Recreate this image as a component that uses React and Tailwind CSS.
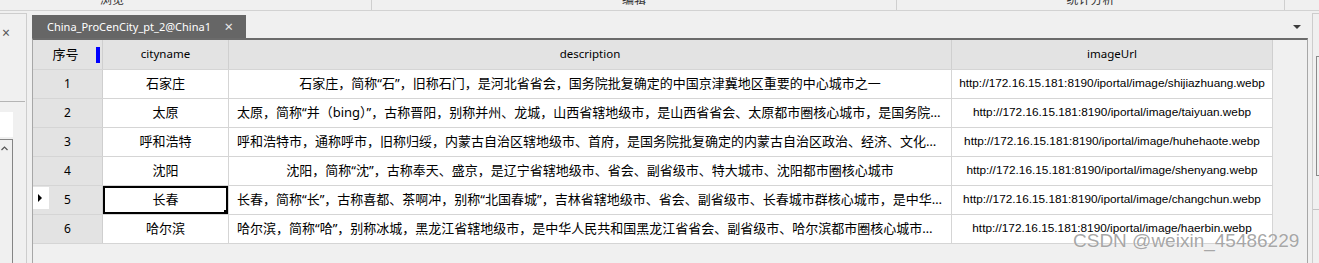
import React from 'react'

const COLS = [
  { key: 'cityname', label: 'cityname', w: 'w-[126px]' },
  { key: 'description', label: 'description', w: 'w-[723px]' },
  { key: 'imageUrl', label: 'imageUrl', w: 'w-[321px]' },
]

const URL = 'http://172.16.15.181:8190/iportal/image/'

const FILAS = [
  {
    cityname: '石家庄',
    description: '石家庄，简称“石”，旧称石门，是河北省省会，国务院批复确定的中国京津冀地区重要的中心城市之一',
    imageUrl: URL + 'shijiazhuang.webp',
  },
  {
    cityname: '太原',
    description: '太原，简称“并（bing）”，古称晋阳，别称并州、龙城，山西省辖地级市，是山西省省会、太原都市圈核心城市，是国务院批复确定的中国中部地区重要的中心城市',
    imageUrl: URL + 'taiyuan.webp',
  },
  {
    cityname: '呼和浩特',
    description: '呼和浩特市，通称呼市，旧称归绥，内蒙古自治区辖地级市、首府，是国务院批复确定的内蒙古自治区政治、经济、文化、科教和金融中心',
    imageUrl: URL + 'huhehaote.webp',
  },
  {
    cityname: '沈阳',
    description: '沈阳，简称“沈”，古称奉天、盛京，是辽宁省辖地级市、省会、副省级市、特大城市、沈阳都市圈核心城市',
    imageUrl: URL + 'shenyang.webp',
  },
  {
    cityname: '长春',
    description: '长春，简称“长”，古称喜都、茶啊冲，别称“北国春城”，吉林省辖地级市、省会、副省级市、长春城市群核心城市，是中华人民共和国重要的工业基地城市',
    imageUrl: URL + 'changchun.webp',
  },
  {
    cityname: '哈尔滨',
    description: '哈尔滨，简称“哈”，别称冰城，黑龙江省辖地级市，是中华人民共和国黑龙江省省会、副省级市、哈尔滨都市圈核心城市、国务院批复确定的中国东北地区重要的中心城市',
    imageUrl: URL + 'haerbin.webp',
  },
]

const CJK = 'font-["Noto_Sans","Noto_Sans_CJK_SC",sans-serif]'

function Grupo({ label, w, sep = true }) {
  return (
    <div className={`${w} h-full flex justify-center items-end ${sep ? 'border-r border-[#cfcfcf]' : ''}`}>
      <span className="mb-[4px] text-[12px] leading-none text-[#333]">{label}</span>
    </div>
  )
}

function Celda({ col, fila, seleccionada }) {
  const esUrl = col.key === 'imageUrl'
  return (
    <div
      className={`${col.w} shrink-0 h-full border-r border-[#d5d5d5] bg-white relative flex items-center justify-center ${esUrl ? 'px-[3px]' : 'px-[8px]'} overflow-hidden`}
    >
      <span
        className={`block w-full text-center truncate ${esUrl ? 'text-[11.8px] font-["Liberation_Sans",sans-serif]' : 'text-[13px]'} text-black leading-none pb-[1px]`}
      >
        {fila[col.key]}
      </span>
      {seleccionada && (
        <>
          <div className="absolute inset-0 border-2 border-black pointer-events-none" />
          <div className="absolute right-0 bottom-0 w-[4px] h-[4px] bg-black" />
        </>
      )}
    </div>
  )
}

export default function App() {
  return (
    <div className={`w-[1319px] h-[263px] overflow-hidden bg-[#f0f0f0] relative ${CJK}`}>
      {/* Ribbon labels (cut off) */}
      <div className="h-[11px] border-b border-[#d2d2d2] overflow-hidden flex">
        <div className="ml-[-147px] flex h-full">
          <Grupo label="浏览" w="w-[519px]" />
          <Grupo label="编辑" w="w-[525px]" />
          <Grupo label="统计分析" w="w-[388px]" />
        </div>
      </div>

      <div className="flex h-[252px]">
        {/* Left dock */}
        <div className="w-[27px] mt-[2px] border-t border-r border-[#cdcdcd] flex flex-col">
          <div className="h-[88px] w-[25px] border-b border-[#b4b4b4]">
            <div className="pl-[2px] pt-[12px] text-[14px] leading-none text-[#555]">×</div>
          </div>
          <div className="mt-[10px] h-[25px] w-[13px] bg-white" />
          <div className="mt-[2px] w-[13px] flex-1 border-t border-r border-[#858585]">
            <svg width="7" height="5" viewBox="0 0 7 5" className="mt-[6px] ml-[1px]">
              <path d="M0.5 4 L3.5 1 L6.5 4" fill="none" stroke="#555" strokeWidth="1.2" />
            </svg>
          </div>
        </div>

        {/* Main attribute table panel */}
        <div className="ml-[5px] mt-[4px] w-[1276px] flex flex-col">
          <div className="h-[23px] flex items-stretch">
            <div className="w-[214px] bg-[#666666] flex items-center pl-[15px] pr-[13px]">
              <span className="text-[11px] text-white leading-none pb-[1px]">China_ProCenCity_pt_2@China1</span>
              <span className="ml-auto text-[15px] text-[#e8e8e8] leading-none">×</span>
            </div>
            <div className="flex-1 flex items-center justify-end pr-[7px]">
              <div className="w-0 h-0 border-l-[4px] border-r-[4px] border-t-[4px] border-l-transparent border-r-transparent border-t-[#3c3c3c]" />
            </div>
          </div>

          <div className="flex-1 border-t-2 border-[#6b6b6b] border-l border-r border-l-[#a7a7a7] border-r-[#a7a7a7]">
            {/* Header */}
            <div className="flex h-[30px] border-b border-[#d5d5d5] w-[1240px]">
              <div className="w-[70px] shrink-0 h-full bg-[#e3e3e3] border-r border-[#cfcfcf] flex items-center justify-center relative">
                <span className="text-[13px] text-black leading-none pr-[4px]">序号</span>
                <div className="absolute left-[63px] top-[7px] w-[4px] h-[16px] bg-[#0000ff]" />
              </div>
              {COLS.map(col => (
                <div
                  key={col.key}
                  className={`${col.w} shrink-0 h-full bg-[#e3e3e3] border-r border-[#cfcfcf] flex items-center justify-center`}
                >
                  <span className="text-[11.5px] text-black leading-none pb-[1px]">{col.label}</span>
                </div>
              ))}
            </div>

            {/* Rows */}
            {FILAS.map((fila, i) => (
              <div key={fila.cityname} className="flex h-[29px] border-b border-[#d5d5d5] w-[1240px]">
                <div className="w-[70px] shrink-0 h-full bg-[#e3e3e3] border-r border-[#cfcfcf] flex items-center justify-center relative">
                  {i === 4 && (
                    <div className="absolute left-0 top-[1px] w-[16px] h-[22px] bg-white flex items-center pl-[5px]">
                      <div className="w-0 h-0 border-t-[4px] border-b-[4px] border-l-[4px] border-t-transparent border-b-transparent border-l-black" />
                    </div>
                  )}
                  <span className="text-[12px] text-black leading-none">{i + 1}</span>
                </div>
                {COLS.map(col => (
                  <Celda key={col.key} col={col} fila={fila} seleccionada={i === 4 && col.key === 'cityname'} />
                ))}
              </div>
            ))}
          </div>
        </div>

        {/* Right dock edge */}
        <div className="ml-[4px] mt-[2px] flex-1 border-t border-l border-[#cdcdcd] flex flex-col">
          <div className="ml-[3px] mt-[42px] h-[120px] border border-r-0 border-[#8a8a8a]" />
          <div className="mt-[33px] border-t border-[#c4c4c4]" />
        </div>
      </div>

      {/* Watermark */}
      <div className="absolute left-[1073px] top-[231px] text-[19px] leading-none text-[#8f8f8f]/80 font-['Liberation_Sans',sans-serif] [text-shadow:0_0_1px_#ffffff]">
        CSDN @weixin_45486229
      </div>
    </div>
  )
}
